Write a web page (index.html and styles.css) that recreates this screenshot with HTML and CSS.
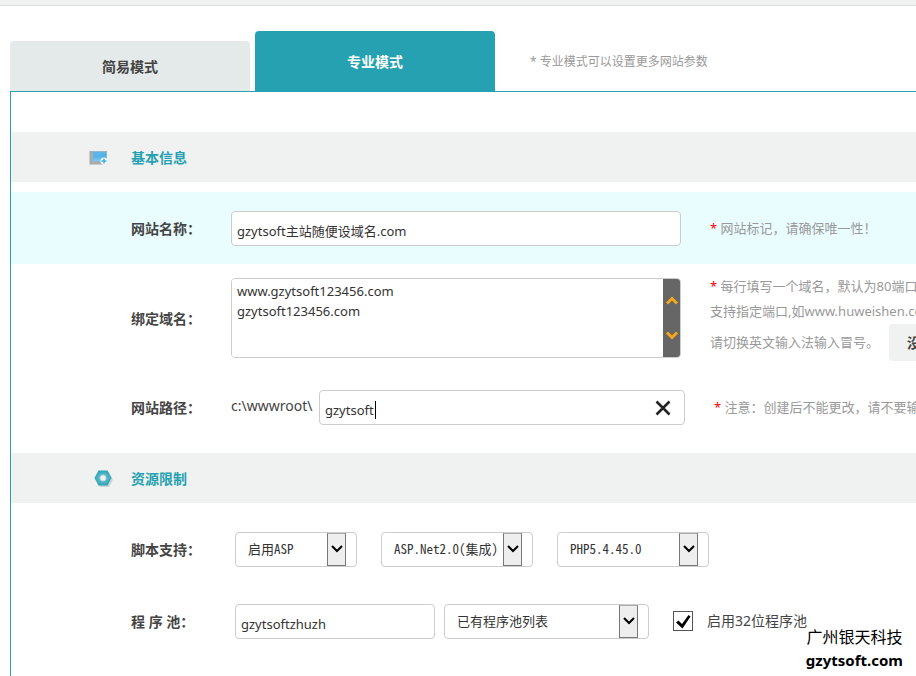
FILE: index.html
```html
<!DOCTYPE html>
<html lang="zh-CN">
<head>
  <meta charset="UTF-8">
  <title>创建网站</title>
  <link rel="stylesheet" href="styles.css">
</head>
<body>
  <div class="topbar"></div>

  <nav class="tabs">
    <a class="tab" href="#simple">简易模式</a>
    <a class="tab active" href="#pro">专业模式</a>
    <span class="tab-tip">* 专业模式可以设置更多网站参数</span>
  </nav>

  <form class="panel">
    <h2 class="section">
      <svg class="icon-site" width="20" height="16" viewBox="0 0 20 16">
        <defs>
          <linearGradient id="screen" x1="0" y1="0" x2="0" y2="1">
            <stop offset="0" stop-color="#2f97d8"/>
            <stop offset="1" stop-color="#7ccdf5"/>
          </linearGradient>
        </defs>
        <path d="M0.5 1v13.500H14" fill="none" stroke="#ccc"/>
        <path d="M2 1v12H14" fill="none" stroke="#aaa" stroke-width="2"/>
        <rect x="3.500" y="1.500" width="14" height="10" fill="url(#screen)" stroke="#9bb4c4"/>
        <path d="M4 2h13v2q-6 3-13 2z" fill="#5bb5e8"/>
        <circle cx="15" cy="11" r="3.500" fill="#f4fafd"/>
        <path d="M15 8.500v5M12.500 11h5" stroke="#3bb0ea" stroke-width="1.500"/>
      </svg>
      基本信息
    </h2>

    <div class="row highlight">
      <label class="name" for="siteName">网站名称：</label>
      <input class="text wide" type="text" id="siteName" value="gzytsoft主站随便设域名.com">
      <p class="hint"><em>*</em> 网站标记，请确保唯一性！</p>
    </div>

    <div class="row domains">
      <label class="name" for="domains">绑定域名：</label>
      <div class="area">
        <textarea id="domains">www.gzytsoft123456.com
gzytsoft123456.com</textarea>
        <div class="scroll">
          <button type="button" aria-label="向上">
            <svg width="12" height="9" viewBox="0 0 12 9"><path d="M1 7.500l5-5 5 5" fill="none" stroke="#f5a81c" stroke-width="3"/></svg>
          </button>
          <button type="button" aria-label="向下">
            <svg width="12" height="9" viewBox="0 0 12 9"><path d="M1 1.500l5 5 5-5" fill="none" stroke="#f5a81c" stroke-width="3"/></svg>
          </button>
        </div>
      </div>
      <div class="hint">
        <p><em>*</em> 每行填写一个域名，默认为80端口</p>
        <p>支持指定端口,如www.huweishen.com</p>
        <div class="hint-line">请切换英文输入法输入冒号。<button class="help" type="button">没有域名</button></div>
      </div>
    </div>

    <div class="row">
      <label class="name" for="path">网站路径：</label>
      <span class="prefix">c:\wwwroot\</span>
      <div class="path">
        <input class="text" type="text" id="path" value="gzytsoft">
        <span class="caret"></span>
        <button class="clear" type="button" aria-label="清除">
          <svg width="16" height="16" viewBox="0 0 16 16"><path d="M1.500 1.500l13 13M14.500 1.500l-13 13" stroke="#222" stroke-width="2.500"/></svg>
        </button>
      </div>
      <p class="hint"><em>*</em> 注意：创建后不能更改，请不要输入</p>
    </div>

    <h2 class="section">
      <svg class="icon-limit" width="20" height="18" viewBox="0 0 20 18">
        <defs>
          <radialGradient id="nut">
            <stop offset="0" stop-color="#7fd0da"/>
            <stop offset="1" stop-color="#2ba3b5"/>
          </radialGradient>
        </defs>
        <path d="M6 2h9l4 7.500-4 7.500H6L2 9.500z" fill="#cfd3d3"/>
        <path d="M4.500 0.500h9L17.500 8l-4 7.500h-9L0.500 8z" fill="url(#nut)"/>
        <circle cx="9" cy="8" r="3" fill="#f0f2f1" stroke="#bcd5d8"/>
      </svg>
      资源限制
    </h2>

    <div class="row">
      <label class="name" for="asp">脚本支持：</label>
      <div class="scripts">
        <div class="select short">
          <select id="asp"><option>启用ASP</option></select>
          <span class="arrow"><svg width="12" height="8" viewBox="0 0 12 8"><path d="M1 1l5 5 5-5" fill="none" stroke="#000" stroke-width="2"/></svg></span>
        </div>
        <div class="select">
          <select id="net" aria-label="ASP.Net"><option>ASP.Net2.0(集成)</option></select>
          <span class="arrow"><svg width="12" height="8" viewBox="0 0 12 8"><path d="M1 1l5 5 5-5" fill="none" stroke="#000" stroke-width="2"/></svg></span>
        </div>
        <div class="select">
          <select id="php" aria-label="PHP"><option>PHP5.4.45.0</option></select>
          <span class="arrow"><svg width="12" height="8" viewBox="0 0 12 8"><path d="M1 1l5 5 5-5" fill="none" stroke="#000" stroke-width="2"/></svg></span>
        </div>
      </div>
    </div>

    <div class="row">
      <label class="name" for="pool">程 序 池：</label>
      <div class="pool">
        <input class="text" type="text" id="pool" value="gzytsoftzhuzh">
        <div class="select long">
          <select id="poolList" aria-label="程序池列表"><option>已有程序池列表</option></select>
          <span class="arrow"><svg width="12" height="8" viewBox="0 0 12 8"><path d="M1 1l5 5 5-5" fill="none" stroke="#000" stroke-width="2"/></svg></span>
        </div>
      </div>
      <label class="check" for="pool32">
        <span class="box">
          <input type="checkbox" id="pool32" checked>
          <svg width="18" height="18" viewBox="0 0 18 18"><path d="M2 10.500l2.500-2 3.500 3.500L14.500 3l2 1.500L8.500 16.500z" fill="#000"/></svg>
        </span>
        启用32位程序池
      </label>
    </div>
  </form>

  <div class="watermark">
    <span>广州银天科技</span>
    <span>gzytsoft.com</span>
  </div>
</body>
</html>
```
FILE: styles.css
```css
* { box-sizing: border-box; }
body { margin: 0; height: 100vh; overflow: hidden; display: flex; flex-direction: column; position: relative; background: #fff; color: #444; font: 14px/20px "Noto Sans", "Noto Sans CJK SC", sans-serif; }
h2, p { margin: 0; }
input, textarea, button, select { font: inherit; color: #333; margin: 0; }
button { border: 0; padding: 0; background: none; }
svg { display: block; }

.topbar { flex: none; height: 6px; background: #f0f2f1; border-bottom: 1px solid #ddd; }

/* tabs */
.tabs { display: flex; align-items: flex-end; padding: 25px 0 0 10px; gap: 5px; }
.tab { width: 240px; height: 50px; line-height: 52px; border-radius: 4px 4px 0 0; background: #e4eae9; color: #444; font-weight: bold; text-align: center; text-decoration: none; }
.tab.active { height: 60px; line-height: 62px; background: #26a1b2; color: #fff; }
.tab-tip { height: 60px; margin-left: 30px; line-height: 62px; font-size: 12px; color: #999; white-space: nowrap; }

.panel { flex: 1; margin-left: 10px; padding-top: 40px; border-top: 1px solid #26a1b2; border-left: 1px solid #26a1b2; }
.section { display: flex; align-items: center; height: 50px; margin-bottom: 10px; padding-top: 2px; background: #f0f2f1; color: #26a1b2; font-size: 14px; }
.row + .section { margin-top: 10px; }
.icon-site { margin: 0 22px 0 78px; }
.icon-limit { margin: 0 17px 0 83px; }

/* form rows */
.row { display: flex; align-items: center; min-height: 72px; padding-left: 120px; white-space: nowrap; }
.row > * { flex: none; }
.highlight { background: #e9fdff; }
.domains { min-height: 107px; }
.name { width: 100px; padding-top: 2px; font-weight: bold; }
.text { height: 35px; padding: 5px 5px 0; border: 1px solid #ccc; border-radius: 4px; background: #fff; font-size: 13px; }
.wide { width: 450px; }
.hint { margin-left: 29px; font-size: 13px; color: #999; line-height: 25px; }
.hint em { color: #f00; font-style: normal; }
.hint-line { display: flex; align-items: center; }
.help { height: 37px; margin-left: 10px; padding: 0 18px; border-radius: 4px; background: #f0f2f1; color: #444; font-size: 14px; font-weight: bold; }

.area { display: flex; width: 450px; height: 80px; border: 1px solid #ccc; border-radius: 4px; overflow: hidden; }
.area textarea { flex: 1; padding: 2px 5px; border: 0; resize: none; overflow: hidden; background: #fff; font-size: 13px; line-height: 20px; }
.scroll { display: flex; flex-direction: column; justify-content: space-between; align-items: center; width: 17px; padding: 17px 0; background: #666; }

.prefix { width: 88px; padding-bottom: 2px; }
.path { position: relative; width: 366px; }
.path .text { width: 100%; }
.caret { position: absolute; left: 56px; top: 11px; width: 1px; height: 18px; background: #000; }
.clear { position: absolute; right: 14px; top: 10px; }

.scripts { display: flex; gap: 24px; margin-left: 4px; }
.pool { display: flex; gap: 9px; margin-left: 4px; }
.pool .text { width: 200px; }
.select { position: relative; width: 152px; }
.short { width: 122px; }
.long { width: 205px; }
.select select { display: block; width: 100%; height: 35px; padding: 0 30px 2px 12px; appearance: none; border: 1px solid #ccc; border-radius: 4px; background: #fff; font: 13px "Noto Sans Mono CJK SC", "Noto Sans CJK SC", monospace; }
.arrow { position: absolute; top: 1px; right: 11px; display: flex; align-items: center; justify-content: center; width: 19px; height: 33px; border: 1px solid #777; border-top-color: #aaa; background: #eee; pointer-events: none; }

.check { display: flex; align-items: center; gap: 14px; margin-left: 24px; }
.box { position: relative; }
.box input { display: block; width: 20px; height: 20px; appearance: none; border: 1px solid #555; background: #fff; }
.box svg { position: absolute; left: 1px; top: 1px; display: none; }
.box input:checked + svg { display: block; }

.watermark { position: absolute; right: 13px; bottom: 4px; display: flex; flex-direction: column; align-items: center; color: #000; font-size: 16px; line-height: 23px; }
.watermark span:last-child { font-size: 15px; font-weight: bold; }
```
